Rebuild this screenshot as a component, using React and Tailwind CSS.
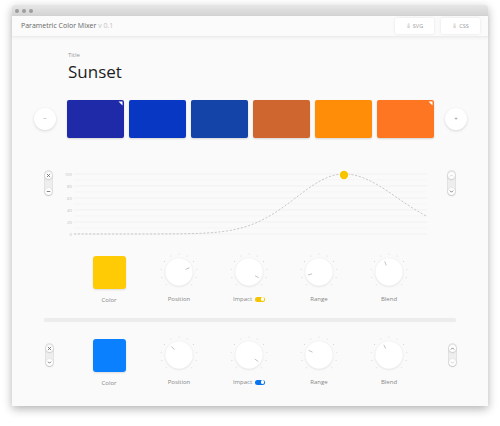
import React, { useId } from 'react';

const swatches = ['#1f2aa8', '#0837c4', '#1444a8', '#cf6630', '#ff8d07', '#ff7622'];

const layers = [
  {
    color: '#ffcb05',
    knobs: [68, 121, 255, 338],
    left: ['x', 'minus'],
    right: [['up', true], ['down', false]],
  },
  {
    color: '#0a80ff',
    knobs: [-41, 125, -66, -27],
    left: ['x', 'down'],
    right: [['up', false], ['down', true]],
  },
];

const Glyph = ({ type, faint }) => {
  const c = faint ? '#c8c8c8' : '#666';
  const paths = {
    x: 'M-1.3 -1.3L1.3 1.3M1.3 -1.3L-1.3 1.3',
    minus: 'M-1.4 0H1.4',
    up: 'M-1.3 0.7L0 -0.6L1.3 0.7',
    down: 'M-1.3 -0.6L0 0.7L1.3 -0.6',
  };
  return (
    <div className="w-[7px] h-[7px] rounded-full bg-white shadow-[0_0.5px_1.5px_rgba(0,0,0,0.25)] flex items-center justify-center">
      <svg width="7" height="7" viewBox="-3.5 -3.5 7 7">
        <path d={paths[type]} stroke={c} strokeWidth="0.8" fill="none" strokeLinecap="round" />
      </svg>
    </div>
  );
};

const Pill = ({ items, tall }) => (
  <div
    className={`w-[9px] ${tall ? 'h-[26px]' : 'h-[24px]'} rounded-full bg-[#eeeeee] border border-[#e2e2e2] flex flex-col items-center justify-between py-[0.5px]`}
  >
    {items.map(([t, faint], i) => (
      <Glyph key={i} type={t} faint={faint} />
    ))}
  </div>
);

const Knob = ({ angle }) => {
  const id = useId().replace(/:/g, '');
  const ticks = [];
  for (let i = 0; i < 11; i++) {
    const a = ((-135 + i * 27) * Math.PI) / 180;
    ticks.push([Math.sin(a) * 18, -Math.cos(a) * 18]);
  }
  const r = (angle * Math.PI) / 180;
  return (
    <svg width="40" height="40" viewBox="-20 -20 40 40">
      <defs>
        <filter id={id} x="-50%" y="-50%" width="200%" height="200%">
          <feDropShadow dx="0" dy="0.6" stdDeviation="1" floodColor="#000" floodOpacity="0.14" />
        </filter>
      </defs>
      {ticks.map(([x, y], i) => (
        <circle key={i} cx={x} cy={y} r="0.55" fill="#d6d6d6" />
      ))}
      <circle r="13.5" fill="#ffffff" filter={`url(#${id})`} />
      <line
        x1={Math.sin(r) * 7.5}
        y1={-Math.cos(r) * 7.5}
        x2={Math.sin(r) * 11}
        y2={-Math.cos(r) * 11}
        stroke="#b3b3b3"
        strokeWidth="0.8"
        strokeLinecap="round"
      />
    </svg>
  );
};

const Toggle = ({ color }) => (
  <span
    className="inline-flex items-center justify-end w-[10px] h-[5px] rounded-full px-[0.7px] ml-[3px]"
    style={{ backgroundColor: color }}
  >
    <span className="w-[3.6px] h-[3.6px] rounded-full bg-white" />
  </span>
);

const ControlRow = ({ layer }) => {
  const names = ['Position', 'Impact', 'Range', 'Blend'];
  return (
    <div className="grid grid-cols-5 w-[350px]">
      <div className="flex flex-col items-center">
        <div className="h-[40px] flex items-center justify-center">
          <div
            className="w-[33px] h-[33px] rounded-[3px] shadow-[0_1px_2px_rgba(0,0,0,0.12)]"
            style={{ backgroundColor: layer.color }}
          />
        </div>
        <span className="mt-[4px] text-[6px] leading-[8px] text-[#888]">Color</span>
      </div>
      {names.map((n, i) => (
        <div key={n} className="flex flex-col items-center">
          <div className="h-[40px] flex items-center justify-center">
            <Knob angle={layer.knobs[i]} />
          </div>
          <span className="mt-[3px] text-[6px] leading-[8px] text-[#888] flex items-center">
            {n}
            {n === 'Impact' && <Toggle color={layer.color === '#ffcb05' ? '#f5c400' : '#0a74f0'} />}
          </span>
        </div>
      ))}
    </div>
  );
};

const Chart = () => {
  const peak = 282;
  const pts = [];
  for (let x = 12; x <= 365; x += 2) {
    const s = x < peak ? 48 : 53;
    const v = 100 * Math.exp(-((x - peak) ** 2) / (2 * s * s));
    pts.push(`${x},${(66 - 0.6 * v).toFixed(2)}`);
  }
  const grid = [];
  for (let v = 0; v <= 100; v += 10) grid.push(v);
  return (
    <svg width="370" height="72" viewBox="0 0 370 72">
      {grid.map((v) => (
        <line
          key={v}
          x1="12"
          x2="365"
          y1={66 - 0.6 * v}
          y2={66 - 0.6 * v}
          stroke={v % 20 === 0 ? '#ececec' : '#f3f3f3'}
          strokeWidth="0.6"
        />
      ))}
      {[0, 20, 40, 60, 80, 100].map((v) => (
        <text
          key={v}
          x="10"
          y={66 - 0.6 * v + 1.5}
          textAnchor="end"
          fontSize="4.3"
          fill="#bdbdbd"
          fontFamily="Open Sans, sans-serif"
        >
          {v}
        </text>
      ))}
      <polyline points={pts.join(' ')} fill="none" stroke="#bdbdbd" strokeWidth="0.8" strokeDasharray="2.2 1.6" />
      <circle cx={peak} cy="7" r="4.8" fill="#ffffff" opacity="0.8" />
      <circle cx={peak} cy="7" r="4.2" fill="#f6c500" />
    </svg>
  );
};

const Swatch = ({ color, corner }) => (
  <div
    className="relative w-[57px] h-[38px] rounded-[2px] shadow-[0_1px_2px_rgba(0,0,0,0.15)]"
    style={{ backgroundColor: color }}
  >
    {corner && (
      <svg className="absolute top-[1px] right-[1px]" width="5" height="5" viewBox="0 0 5 5">
        <path d="M0.5 0.5H4.5V4.5Z" fill="#ffffff" />
      </svg>
    )}
  </div>
);

const RoundButton = ({ children }) => (
  <button className="w-[22px] h-[22px] rounded-full bg-white shadow-[0_1px_3px_rgba(0,0,0,0.14)] flex items-center justify-center text-[6px] leading-none text-[#888]">
    {children}
  </button>
);

const App = () => {
  return (
    <div className="w-[500px] h-[426px] bg-white pt-[5px] px-[12px] font-['Open_Sans','Liberation_Sans',sans-serif]">
      <div className="w-[476px] bg-[#fafafa] shadow-[0_3px_10px_rgba(0,0,0,0.3)] rounded-t-[3px]">
        {/* title bar */}
        <div className="h-[11px] rounded-t-[3px] bg-gradient-to-b from-[#e6e6e6] to-[#d3d3d3] flex items-center pl-[3px] gap-[3px]">
          <span className="w-[4px] h-[4px] rounded-full bg-[#9d9d9d]" />
          <span className="w-[4px] h-[4px] rounded-full bg-[#9d9d9d]" />
          <span className="w-[4px] h-[4px] rounded-full bg-[#9d9d9d]" />
        </div>

        {/* header */}
        <div className="h-[21px] bg-[#fbfbfb] border-b border-[#ededed] shadow-[0_1px_3px_rgba(0,0,0,0.05)] flex items-center justify-between pl-[9px] pr-[8px]">
          <div className="text-[7px] text-[#666]">
            Parametric Color Mixer <span className="text-[#c4c4c4]">v 0.1</span>
          </div>
          <div className="flex gap-[7px]">
            {['SVG', 'CSS'].map((t) => (
              <button
                key={t}
                className="w-[39px] h-[16px] bg-white rounded-[2px] shadow-[0_0_3px_rgba(0,0,0,0.1)] text-[5.5px] text-[#999] flex items-center justify-center gap-[2px]"
              >
                <span>⇩</span>
                {t}
              </button>
            ))}
          </div>
        </div>

        {/* main */}
        <div className="pt-[14px] pb-[19px]">
          <div className="pl-[56px]">
            <div className="text-[6px] leading-[8px] text-[#999]">Title</div>
            <div className="mt-[3px] text-[17px] leading-[20px] text-[#1e1e1e]">Sunset</div>
          </div>

          <div className="mt-[18px] flex items-center pl-[22px]">
            <RoundButton>−</RoundButton>
            <div className="ml-[11px] flex gap-[5px]">
              {swatches.map((c, i) => (
                <Swatch key={c} color={c} corner={i === 0 || i === 5} />
              ))}
            </div>
            <div className="ml-[11px]">
              <RoundButton>+</RoundButton>
            </div>
          </div>

          <div className="mt-[30px] flex items-start pl-[32px]">
            <div className="mt-[2px]">
              <Pill items={layers[0].left.map((t) => [t, false])} tall />
            </div>
            <div className="ml-[9px]">
              <Chart />
            </div>
            <div className="ml-[15px] mt-[2px]">
              <Pill items={layers[0].right} tall />
            </div>
          </div>

          <div className="mt-[12px] pl-[62px]">
            <ControlRow layer={layers[0]} />
          </div>

          <div className="mt-[14px] ml-[32px] w-[412px] h-[3px] rounded-full bg-[#ececec] shadow-[0_1px_1px_rgba(0,0,0,0.06)]" />

          <div className="mt-[14px] flex items-start pl-[33px]">
            <div className="mt-[8px]">
              <Pill items={layers[1].left.map((t) => [t, false])} />
            </div>
            <div className="ml-[20px]">
              <ControlRow layer={layers[1]} />
            </div>
            <div className="ml-[24px] mt-[8px]">
              <Pill items={layers[1].right} />
            </div>
          </div>
        </div>
      </div>
    </div>
  );
};

export default App;
